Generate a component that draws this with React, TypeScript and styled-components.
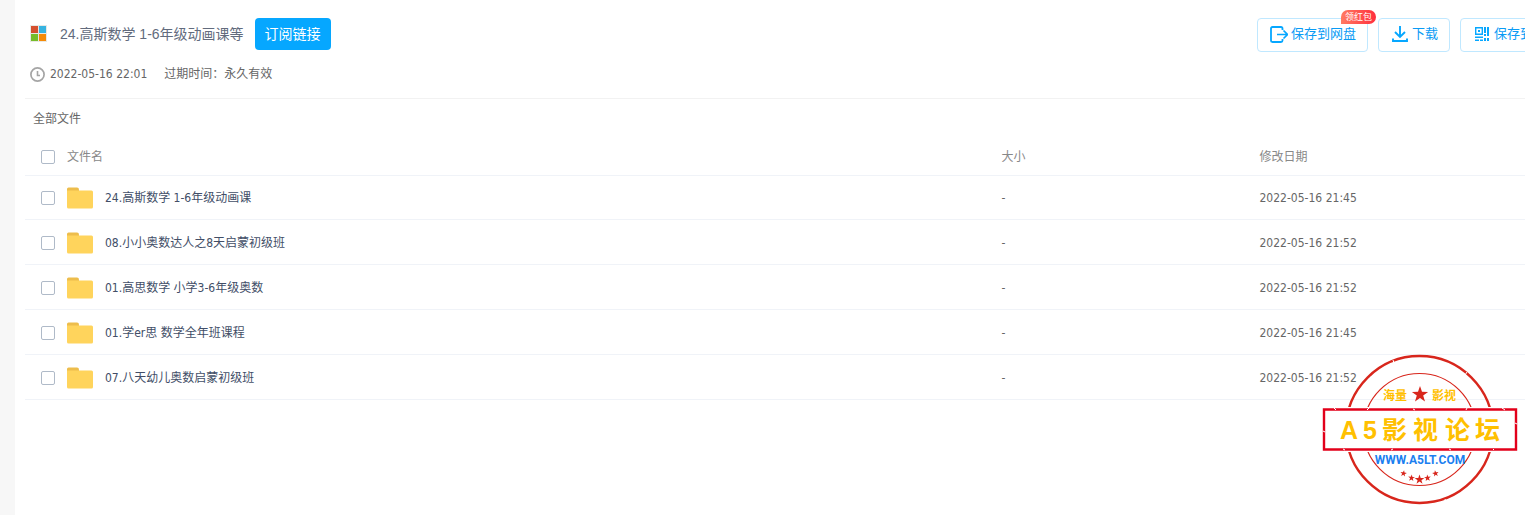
import React from "react";
import styled, { createGlobalStyle } from "styled-components";

const GlobalStyle = createGlobalStyle`
  *, *::before, *::after { box-sizing: border-box; }
  body {
    margin: 0;
    background: #fff;
    color: #666;
    font: 12px/16px "DejaVu Sans Condensed", "Noto Sans", "Noto Sans CJK SC", sans-serif;
  }
`;

const Page = styled.div`
  position: relative;
  min-height: 100vh;
  padding-left: 10px;
  border-left: 15px solid #f7f7f7;
  overflow: hidden;
`;

const Header = styled.header`
  display: flex;
  justify-content: space-between;
  height: 99px;
  padding: 18px 0 0 5px;
  border-bottom: 1px solid #f2f2f2;
`;

const TitleRow = styled.div`
  display: flex;
  align-items: center;
  height: 32px;
`;

const Title = styled.h1`
  margin: 0 11px 0 13px;
  color: #626b7d;
  font: 400 14px/20px "Liberation Sans", "Noto Sans CJK SC", sans-serif;
  white-space: nowrap;
`;

const SubscribeButton = styled.button`
  height: 32px;
  padding: 0 10px;
  border: 0;
  border-radius: 4px;
  background: #06a7ff;
  color: #fff;
  font: 400 14px/20px "Liberation Sans", "Noto Sans CJK SC", sans-serif;
  cursor: pointer;
`;

const Meta = styled.div`
  display: flex;
  align-items: center;
  height: 16px;
  margin-top: 16px;
  white-space: nowrap;
`;

const MetaTime = styled.time`
  margin: 0 17px 0 5px;
`;

/* The toolbar runs past the right edge of the panel. */
const Actions = styled.div`
  display: flex;
  flex: none;
  gap: 10px;
  margin-right: -46px;
`;

const ActionButton = styled.button`
  position: relative;
  display: flex;
  align-items: center;
  gap: 3px;
  height: 34px;
  padding: 0 11px 2px;
  border: 1px solid #c0e8ff;
  border-radius: 4px;
  background: #fff;
  color: #0a9bf5;
  font: 400 13px/20px "Liberation Sans", "Noto Sans CJK SC", sans-serif;
  white-space: nowrap;
  cursor: pointer;
`;

const Badge = styled.span`
  position: absolute;
  top: -9px;
  right: -9px;
  height: 14px;
  padding: 0 4px;
  border-radius: 7px 7px 7px 0;
  background: linear-gradient(90deg, #ff7a62, #ff2f3d);
  color: #fff;
  font-size: 9px;
  line-height: 14px;
`;

const Breadcrumb = styled.nav`
  display: flex;
  align-items: center;
  height: 39px;
  padding-left: 8px;
`;

const FileTable = styled.table`
  width: 100%;
  table-layout: fixed;
  border-collapse: separate;
  border-spacing: 0;
`;

const Row = styled.tr<{ $height: number }>`
  height: ${(p) => p.$height}px;
`;

const HeadCell = styled.th<{ $width?: string }>`
  width: ${(p) => p.$width ?? "auto"};
  padding: 1px 0 0;
  border-bottom: 1px solid #f0f3f8;
  color: #888;
  font-weight: 400;
  text-align: left;
`;

const Cell = styled.td`
  padding: 1px 0 0;
  border-bottom: 1px solid #f0f3f8;
`;

const NameGroup = styled.label`
  display: flex;
  align-items: center;
  gap: 12px;
  padding-left: 16px;
`;

const Checkbox = styled.input`
  appearance: none;
  width: 14px;
  height: 14px;
  margin: 0;
  border: 1px solid #afbac8;
  border-radius: 2px;
  background: #fff;
  &:checked { background: #06a7ff; }
`;

const FileName = styled.a`
  color: #424e67;
  text-decoration: none;
`;

const Stamp = styled.svg`
  position: absolute;
  right: 5px;
  bottom: 7px;
  pointer-events: none;
`;

const files = [
  { name: "24.高斯数学 1-6年级动画课", date: "2022-05-16 21:45" },
  { name: "08.小小奥数达人之8天启蒙初级班", date: "2022-05-16 21:52" },
  { name: "01.高思数学 小学3-6年级奥数", date: "2022-05-16 21:52" },
  { name: "01.学er思 数学全年班课程", date: "2022-05-16 21:45" },
  { name: "07.八天幼儿奥数启蒙初级班", date: "2022-05-16 21:52" },
];

const TilesIcon = () => (
  <svg width="17" height="19" viewBox="0 0 17 19" aria-hidden="true">
    <path d="M0 0h17v17H0z" fill="#e8e8e4" />
    <path d="M1 1h7v7H1z" fill="#d5502f" />
    <path d="M9 1h7v7H9z" fill="#37b3e0" />
    <path d="M1 9h7v7H1z" fill="#76bd2b" />
    <path d="M9 9h7v7H9z" fill="#f58a07" />
  </svg>
);

const ClockIcon = () => (
  <svg width="15" height="15" viewBox="0 0 15 15" fill="none" stroke="#a5a5a5" aria-hidden="true">
    <circle cx="7.5" cy="7.5" r="6.6" strokeWidth="1.7" />
    <path d="M7.5 4v4.5H10" strokeWidth="1.6" />
  </svg>
);

const SaveIcon = () => (
  <svg width="19" height="18" viewBox="0 0 19 18" fill="none" stroke="#06a7ff" strokeWidth="1.8" aria-hidden="true">
    <path d="M13.500 5V3.500Q13.500 2 12 2H3.500Q2 2 2 3.500v12Q2 17 3.500 17H12q1.500 0 1.500-1.500V14" />
    <path d="M8 9.500h10M14.500 5.500l4 4-4 4" strokeWidth="1.700" />
  </svg>
);

const DownloadIcon = () => (
  <svg width="19" height="18" viewBox="0 0 19 18" fill="none" stroke="#06a7ff" strokeWidth="1.9" aria-hidden="true">
    <path d="M10 1v11M5 7l5 5 5-5" />
    <path d="M3 13.500V16h14v-2.500" />
  </svg>
);

const QrIcon = () => (
  <svg width="19" height="18" viewBox="0 0 19 18" aria-hidden="true">
    <path d="M3.700 2.700h6.600v6.600H3.700z" fill="none" stroke="#06a7ff" strokeWidth="1.400" />
    <path d="M6 5h2v2H6zM12 2h2v6h-2zM15 2h2v9h-2zM12 9h2v2h-2zM3 11.500h8V13H3zM3 14.500h4V16H3zM8 14.500h3V16H8zM12 13h2v3h-2zM15 13h2v3h-2z" fill="#06a7ff" />
  </svg>
);

const FolderIcon = () => (
  <svg width="26" height="22" viewBox="0 0 26 22" aria-hidden="true">
    <path d="M0 6V2Q0 .5 1.500.5H10Q12 .5 12 2.500V6z" fill="#edbd4c" />
    <path d="M0 3.500H24.500Q26 3.500 26 5V20Q26 21.500 24.500 21.500H1.500Q0 21.500 0 20z" fill="#ffd45c" />
  </svg>
);

const STAR = "M0-8.500 2-2.700 8.100-2.600 3.200 1.100 5 7 0 3.400-5 7-3.200 1.100-8.100-2.600-2-2.700z";

const ForumStamp = () => (
  <Stamp width="200" height="156" viewBox="0 0 200 156" role="img" aria-label="A5影视论坛">
    <g fill="none" stroke="#d8261c">
      <circle cx="99.500" cy="77.500" r="73.500" strokeWidth="2.400" />
      <circle cx="99.500" cy="77.500" r="56" strokeWidth="1.200" />
    </g>
    <path d="M51 24l2 3M73 8l1 3M147 20l-2 3M125 147l1 3M77 149l-1 3M31 114l-3 1" stroke="#fff" strokeWidth="1" />
    <path d="M26 55h148v45H26z" fill="#fff" />
    <path d="M4 57.500h192v40H4z" fill="#fff" stroke="#e2001a" strokeWidth="2.400" />
    <path d="M14 56l2 2M47 58l2-2M93 57l2 1M146 58l1-2M182 56l3 2M195 71l2 1M3 79l2 1M23 97l2 1M71 98l2-1M129 97l2 1M173 98l1-1" stroke="#fff" strokeWidth="1" />
    <g fill="#ffc000" fontFamily='"Liberation Sans", "Noto Sans CJK SC", sans-serif' fontWeight="700">
      <text x="63" y="48" fontSize="12">海量</text>
      <text x="112" y="48" fontSize="12">影视</text>
      <text x="20 43 62 93 125 155" y="87" fontSize="25">A5影视论坛</text>
    </g>
    <text x="100" y="112" textAnchor="middle" fill="#1c7ff0" fontFamily='Roboto, "Liberation Sans", sans-serif' fontSize="12" fontWeight="700">
      WWW.A5LT.COM
    </text>
    <g fill="#d8261c">
      <path d={STAR} transform="translate(100 42.500)" />
      <path d={STAR} transform="translate(83.500 121.500) rotate(10) scale(.4)" />
      <path d={STAR} transform="translate(91.500 126) rotate(5) scale(.42)" />
      <path d={STAR} transform="translate(99.500 127.500) scale(.6)" />
      <path d={STAR} transform="translate(107.500 126) rotate(-5) scale(.42)" />
      <path d={STAR} transform="translate(115.500 121.500) rotate(-10) scale(.4)" />
    </g>
  </Stamp>
);

export default function App() {
  return (
    <>
      <GlobalStyle />
      <Page>
        <Header>
          <div>
            <TitleRow>
              <TilesIcon />
              <Title>24.高斯数学 1-6年级动画课等</Title>
              <SubscribeButton type="button">订阅链接</SubscribeButton>
            </TitleRow>
            <Meta>
              <ClockIcon />
              <MetaTime>2022-05-16 22:01</MetaTime>
              <span>过期时间：永久有效</span>
            </Meta>
          </div>
          <Actions>
            <ActionButton type="button">
              <SaveIcon />
              保存到网盘
              <Badge>领红包</Badge>
            </ActionButton>
            <ActionButton type="button">
              <DownloadIcon />
              下载
            </ActionButton>
            <ActionButton type="button">
              <QrIcon />
              保存到手机
            </ActionButton>
          </Actions>
        </Header>
        <Breadcrumb>全部文件</Breadcrumb>
        <FileTable>
          <thead>
            <Row $height={38}>
              <HeadCell $width="65.1%">
                <NameGroup>
                  <Checkbox type="checkbox" />
                  文件名
                </NameGroup>
              </HeadCell>
              <HeadCell $width="17.2%">大小</HeadCell>
              <HeadCell>修改日期</HeadCell>
            </Row>
          </thead>
          <tbody>
            {files.map((file, i) => (
              <Row key={file.name} $height={i === 0 ? 44 : 45}>
                <Cell>
                  <NameGroup>
                    <Checkbox type="checkbox" aria-label={file.name} />
                    <FolderIcon />
                    <FileName href="#">{file.name}</FileName>
                  </NameGroup>
                </Cell>
                <Cell>-</Cell>
                <Cell>{file.date}</Cell>
              </Row>
            ))}
          </tbody>
        </FileTable>
        <ForumStamp />
      </Page>
    </>
  );
}
